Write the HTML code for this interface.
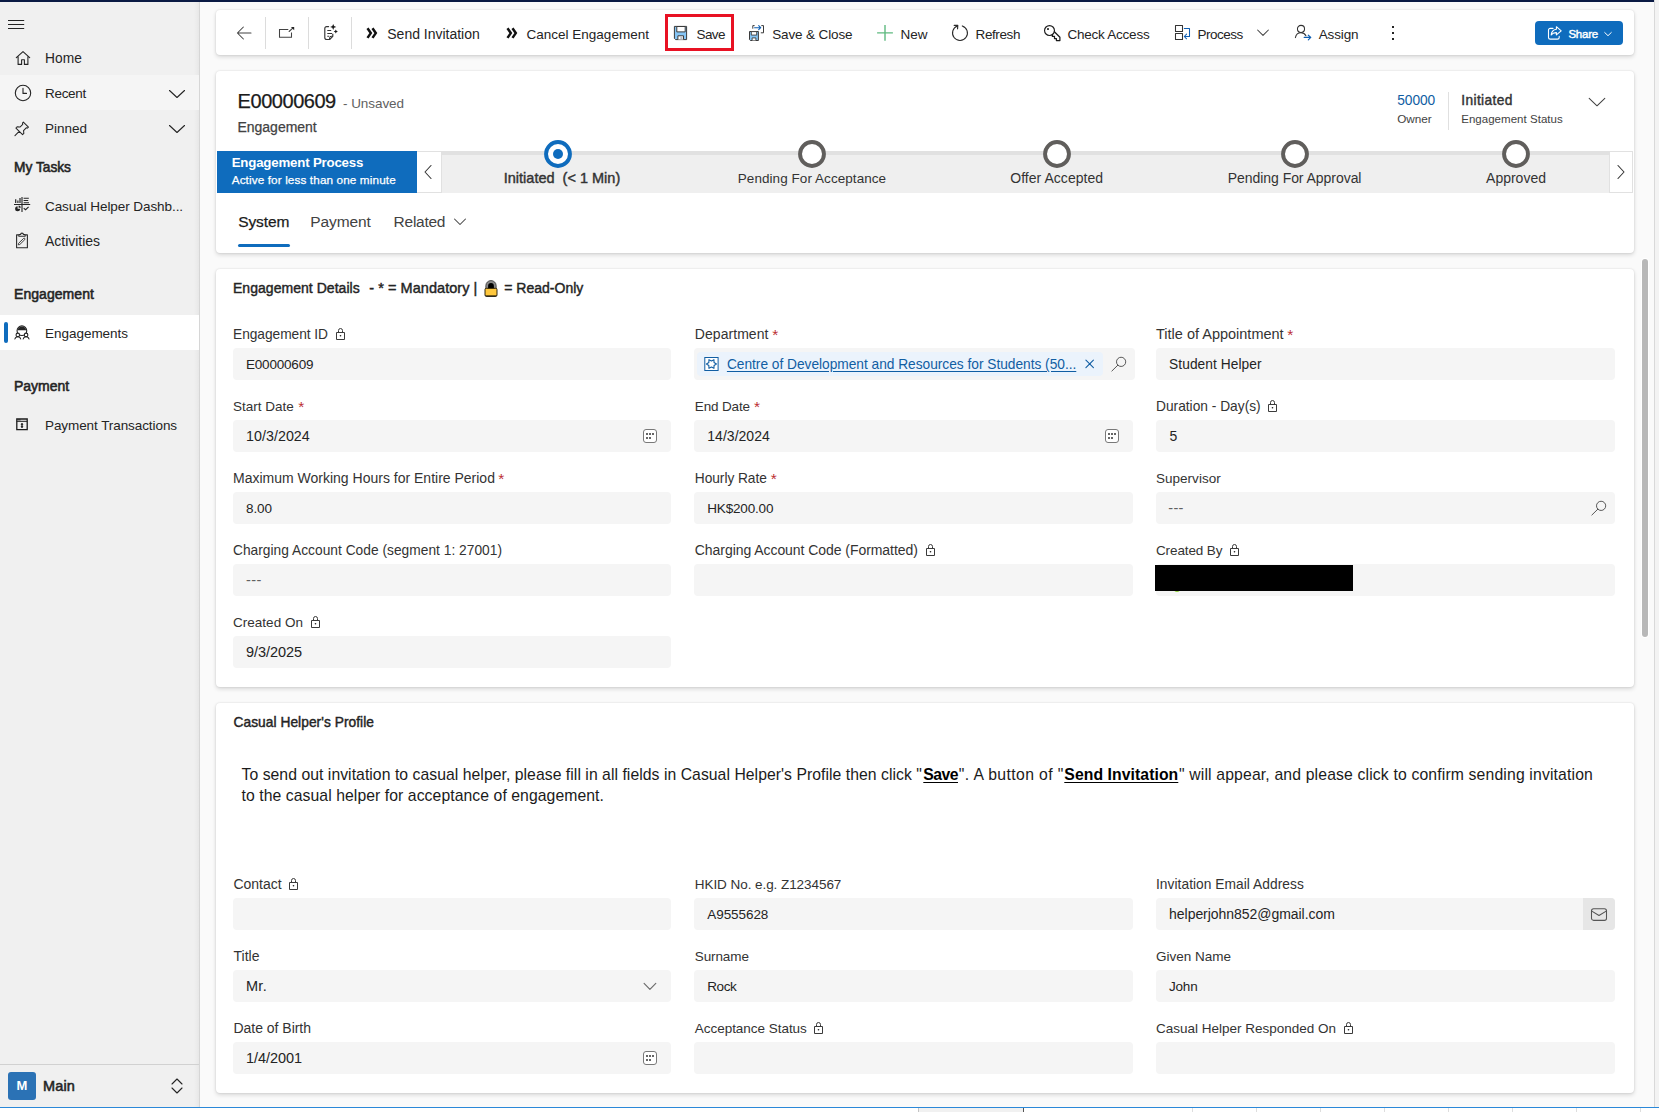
<!DOCTYPE html>
<html lang="en"><head><meta charset="utf-8"><title>Engagement: E00000609</title>
<style>
html,body{margin:0;padding:0;}
html{width:1659px;height:1112px;overflow:hidden;}
body{width:1659px;height:1112px;overflow:hidden;position:relative;background:#fafafa;font-family:"Liberation Sans",sans-serif;color:#242424;}
.a{position:absolute;display:block;}
.t{position:absolute;white-space:pre;display:block;}
.card{position:absolute;background:#fff;border-radius:4px;box-shadow:0 0 2px rgba(0,0,0,.12),0 2px 4px rgba(0,0,0,.14);}
.inp{position:absolute;background:#f5f5f5;border-radius:4px;}
</style></head>
<body>
<div class="a" style="left:0px;top:0px;width:1659px;height:1112px;background:#fafafa;"></div>
<div class="a" style="left:1655px;top:0px;width:4px;height:1112px;background:#f3f3f3;"></div>
<div class="a" style="left:1654px;top:0px;width:1px;height:1108px;background:#d9d9d9;"></div>
<div class="a" style="left:0px;top:0px;width:1654px;height:2px;background:#0a1a44;"></div>
<div class="a" style="left:0px;top:1108px;width:1659px;height:4px;background:#ffffff;"></div>
<div class="a" style="left:0px;top:1107px;width:1659px;height:1px;background:#2b88d8;"></div>
<div class="a" style="left:919px;top:1108px;width:104px;height:4px;background:#f1f1f1;"></div>
<div class="a" style="left:918px;top:1108px;width:1px;height:4px;background:#c4c4c4;"></div>
<div class="a" style="left:1023px;top:1108px;width:1px;height:4px;background:#555;"></div>
<div class="a" style="left:1192px;top:1108px;width:1px;height:4px;background:#dedede;"></div>
<div class="a" style="left:1256px;top:1108px;width:1px;height:4px;background:#dedede;"></div>
<div class="a" style="left:1320px;top:1108px;width:1px;height:4px;background:#dedede;"></div>
<div class="a" style="left:1384px;top:1108px;width:1px;height:4px;background:#dedede;"></div>
<div class="a" style="left:1448px;top:1108px;width:1px;height:4px;background:#dedede;"></div>
<div class="a" style="left:1512px;top:1108px;width:1px;height:4px;background:#dedede;"></div>
<div class="a" style="left:1576px;top:1108px;width:1px;height:4px;background:#dedede;"></div>
<div class="a" style="left:1640px;top:1108px;width:1px;height:4px;background:#dedede;"></div>
<div class="a" style="left:1642px;top:259px;width:6px;height:378px;background:#b8b8b8;border-radius:3px;box-shadow:0 0 0 1px rgba(255,255,255,.950);"></div>
<div class="a" style="left:0px;top:2px;width:199px;height:1105px;background:#f0f0f0;"></div>
<div class="a" style="left:199px;top:2px;width:1px;height:1105px;background:#d6d6d6;"></div>
<div class="a" style="left:194px;top:2px;width:5px;height:1105px;background:linear-gradient(90deg,rgba(0,0,0,0),rgba(0,0,0,.035));"></div>
<div class="a" style="left:0px;top:75px;width:199px;height:35px;background:#f5f5f5;"></div>
<div class="a" style="left:0px;top:315px;width:199px;height:35px;background:#ffffff;"></div>
<div class="a" style="left:4px;top:322px;width:4px;height:21px;background:#0f6cbd;border-radius:2px;"></div>
<div class="a" style="left:0px;top:1064px;width:199px;height:1px;background:#d1d1d1;"></div>
<svg class="a" style="left:6px;top:16px;" width="20" height="16" viewBox="0 0 20 16" fill="none"><path d="M2 4.5h16.2M2 8.5h16.2M2 12.5h16.2" stroke="#242424" stroke-width="1"/></svg>
<svg class="a" style="left:13.5px;top:49.3px;" width="18" height="18" viewBox="0 0 18 18" fill="none"><path d="M2.3 8.7 9 2.6l6.700 6.100M4.100 7.500v7.900h3.500v-4.700h2.800v4.700h3.500V7.500" stroke="#242424" stroke-width="1.100" stroke-linejoin="round" stroke-linecap="round"/></svg>
<span class="t" style="top:49px;font-size:13.75px;line-height:20px;color:#242424;letter-spacing:0.078px;left:45px;"><span>Home</span></span>
<svg class="a" style="left:13.6px;top:83.8px;" width="18" height="18" viewBox="0 0 18 18" fill="none"><circle cx="9" cy="9" r="7.700" stroke="#242424" stroke-width="1.100"/><path d="M9 4.400V9.400h3.500" stroke="#242424" stroke-width="1.100" stroke-linecap="round" stroke-linejoin="round"/></svg>
<span class="t" style="top:84px;font-size:13.5px;line-height:20px;color:#242424;letter-spacing:-0.297px;left:45px;"><span>Recent</span></span>
<svg class="a" style="left:168px;top:88px;" width="18" height="12" viewBox="0 0 18 12" fill="none"><path d="M1.5 2.5 9 9.5l7.5-7" stroke="#242424" stroke-width="1.1" stroke-linecap="round" stroke-linejoin="round"/></svg>
<svg class="a" style="left:13.4px;top:120.3px;" width="17.6" height="17.6" viewBox="0 0 18 18" fill="none"><path d="M10.6 2.2l5.2 5.2-1 .9-1.3-.3-2.7 2.9.3 2.9-1.3 1.2-6.8-6.8 1.2-1.3 2.9.3 2.9-2.7-.3-1.3zM6.3 11.7 2 16" stroke="#242424" stroke-width="1.05" stroke-linejoin="round" stroke-linecap="round"/></svg>
<span class="t" style="top:119px;font-size:13.5px;line-height:20px;color:#242424;letter-spacing:-0.008px;left:45px;"><span>Pinned</span></span>
<svg class="a" style="left:168px;top:123px;" width="18" height="12" viewBox="0 0 18 12" fill="none"><path d="M1.5 2.5 9 9.5l7.5-7" stroke="#242424" stroke-width="1.1" stroke-linecap="round" stroke-linejoin="round"/></svg>
<span class="t" style="top:158px;font-size:13.75px;line-height:20px;color:#242424;-webkit-text-stroke:0.550px #242424;letter-spacing:-0.008px;left:14px;"><span>My Tasks</span></span>
<svg class="a" style="left:13px;top:196px;" width="18" height="18" viewBox="0 0 18 18" fill="none"><path d="M1 8.500h16.200M9 1v15" stroke="#242424" stroke-width="1.100"/><path d="M2.700 3.300V7M4.900 4.600V7M7 2V7" stroke="#242424" stroke-width="1.200"/><path d="M10.600 2.300h5.200M10.600 4.500h4.600M10.600 6.700h5.400" stroke="#242424" stroke-width="1.100"/><path d="M4.600 10.200a2.500 2.500 0 1 0 2.500 2.500H4.600z" fill="#242424"/><path d="M5.600 9.600a2.300 2.300 0 0 1 2.200 2.200H5.600z" fill="#242424"/><path d="M10.700 12.300l1.900 1.400 3-2.800" stroke="#242424" stroke-width="1.100"/></svg>
<span class="t" style="top:197px;font-size:13.5px;line-height:20px;color:#242424;letter-spacing:-0.072px;left:45px;"><span>Casual Helper Dashb...</span></span>
<svg class="a" style="left:13px;top:232px;" width="18" height="18" viewBox="0 0 18 18" fill="none"><path d="M5.800 2.900H3.600v12.900h10.800V2.900h-2.200" stroke="#2b2b2b" stroke-width="1.100" stroke-linejoin="round"/><path d="M5.900 4.300V2.500h1.700a1.400 1.400 0 0 1 2.800 0h1.700v1.800z" stroke="#2b2b2b" stroke-width="1.100" stroke-linejoin="round"/><path d="M5.300 12.800l.3-1.500 5-4.900a.85.85 0 0 1 1.200 1.200l-5 4.900z" stroke="#2b2b2b" stroke-width="0.900" stroke-linejoin="round"/></svg>
<span class="t" style="top:231px;font-size:14.0px;line-height:20px;color:#242424;letter-spacing:-0.023px;left:45px;"><span>Activities</span></span>
<span class="t" style="top:284px;font-size:14.0px;line-height:20px;color:#242424;-webkit-text-stroke:0.550px #242424;letter-spacing:0.059px;left:14px;"><span>Engagement</span></span>
<svg class="a" style="left:13px;top:324px;" width="18" height="18" viewBox="0 0 18 18" fill="none"><circle cx="8.900" cy="6.700" r="4.850" stroke="#242424" stroke-width="1.100"/><path d="M4.700 6.200a4.250 4.250 0 0 1 8.400 0z" fill="#242424"/><circle cx="4.800" cy="10.900" r="1.750" fill="#fff" stroke="#242424" stroke-width="1.100"/><circle cx="13.100" cy="10.900" r="1.750" fill="#fff" stroke="#242424" stroke-width="1.100"/><path d="M1.900 15c.4-1.700 1.500-2.300 2.900-2.300s2.500.6 2.900 2.300M10.200 15c.4-1.700 1.500-2.300 2.900-2.300s2.500.6 2.900 2.300" stroke="#242424" stroke-width="1.050" stroke-linecap="round"/></svg>
<span class="t" style="top:324px;font-size:13.5px;line-height:20px;color:#242424;letter-spacing:-0.028px;left:45px;"><span>Engagements</span></span>
<span class="t" style="top:376px;font-size:14.0px;line-height:20px;color:#242424;-webkit-text-stroke:0.550px #242424;letter-spacing:-0.036px;left:14px;"><span>Payment</span></span>
<svg class="a" style="left:13px;top:416px;" width="18" height="18" viewBox="0 0 18 18" fill="none"><path d="M3.800 3h10.400v10.600H3.800z" stroke="#1b1b1b" stroke-width="1.300"/><path d="M3.800 5.300h10.400" stroke="#1b1b1b" stroke-width="1"/><path d="M4.600 3.900h3" stroke="#1b1b1b" stroke-width="0.800"/><path d="M9 7.200v4.600" stroke="#1b1b1b" stroke-width="1.300"/><path d="M7.500 8.700 9 7l1.500 1.700zM7.500 10.300 9 12l1.500-1.700z" fill="#1b1b1b"/></svg>
<span class="t" style="top:416px;font-size:13.5px;line-height:20px;color:#242424;letter-spacing:-0.079px;left:45px;"><span>Payment Transactions</span></span>
<div class="a" style="left:8px;top:1072px;width:28px;height:28px;background:#2b72b5;border-radius:3px;"></div>
<span class="t" style="top:1076px;font-size:13px;line-height:19px;color:#fff;font-weight:700;left:-98px;width:240px;text-align:center;"><span>M</span></span>
<span class="t" style="top:1076px;font-size:14.5px;line-height:21px;color:#242424;-webkit-text-stroke:0.550px #242424;letter-spacing:0.141px;left:43px;"><span>Main</span></span>
<svg class="a" style="left:168px;top:1076px;" width="18" height="20" viewBox="0 0 18 20" fill="none"><path d="M4 8 9 3l5 5M4 12l5 5 5-5" stroke="#242424" stroke-width="1.1" stroke-linejoin="round" stroke-linecap="round"/></svg>
<div class="card" style="left:216px;top:10px;width:1418px;height:45px;"></div>
<div class="a" style="left:265px;top:17px;width:1px;height:32px;background:#dcdcdc;"></div>
<div class="a" style="left:308px;top:17px;width:1px;height:32px;background:#dcdcdc;"></div>
<div class="a" style="left:351px;top:17px;width:1px;height:32px;background:#dcdcdc;"></div>
<svg class="a" style="left:235px;top:24px;" width="18" height="18" viewBox="0 0 18 18" fill="none"><path d="M16 9H2.6M8.4 3 2.4 9l6 6" stroke="#424242" stroke-width="1.05" stroke-linecap="round" stroke-linejoin="round"/></svg>
<svg class="a" style="left:277px;top:24px;" width="18" height="18" viewBox="0 0 18 18" fill="none"><path d="M11.300 5.400H2.500v7.850h12V8.600" stroke="#424242" stroke-width="1.050"/><path d="M12.100 7.500 16.300 3.700" stroke="#424242" stroke-width="1.050" stroke-linecap="round"/><path d="M13.900 2.900h3.300v3.300z" fill="#242424"/></svg>
<svg class="a" style="left:321px;top:23px;" width="20" height="20" viewBox="0 0 20 20" fill="none"><path d="M7.600 3.600H5.600A1.800 1.800 0 0 0 3.800 5.400v9.300a1.800 1.800 0 0 0 1.800 1.800h3l3.200-3.200V11" stroke="#333" stroke-width="1.150" stroke-linejoin="round" stroke-linecap="round"/><path d="M8.600 16.500v-1.700a1.500 1.500 0 0 1 1.500-1.500h1.700" stroke="#333" stroke-width="1"/><path d="M6.300 7.400h3.900M6.300 10.500H11M6.300 13.300h1.900" stroke="#333" stroke-width="1.050"/><path d="M12.200 0.900l.9 2.150 2.150.9-2.150.9-.9 2.150-.9-2.150-2.150-.9 2.150-.9zM14.800 6.400l.65 1.450 1.450.65-1.450.65-.65 1.450-.65-1.450-1.450-.65 1.450-.65z" fill="#1b1b1b"/></svg>
<svg class="a" style="left:366px;top:26.5px;" width="12" height="13" viewBox="0 0 12 13" fill="none"><path d="M1.500 1.300 4.800 6.100 1.500 10.900M6.500 1.300 9.800 6.100 6.500 10.900" stroke="#111" stroke-width="2.500" stroke-linejoin="miter"/></svg>
<span class="t" style="top:24px;font-size:14.0px;line-height:20px;color:#242424;letter-spacing:-0.015px;left:387.3px;"><span>Send Invitation</span></span>
<svg class="a" style="left:506px;top:26.5px;" width="12" height="13" viewBox="0 0 12 13" fill="none"><path d="M1.500 1.300 4.800 6.100 1.500 10.900M6.500 1.300 9.800 6.100 6.500 10.900" stroke="#111" stroke-width="2.500" stroke-linejoin="miter"/></svg>
<span class="t" style="top:25px;font-size:13.5px;line-height:20px;color:#242424;letter-spacing:0.015px;left:526.4px;"><span>Cancel Engagement</span></span>
<div class="a" style="left:665px;top:14px;width:63px;height:31px;border:3px solid #e81123;"></div>
<svg class="a" style="left:673px;top:25px;" width="16" height="16" viewBox="0 0 16 16" fill="none"><path d="M1.400 1.400h12.200v13.200H2.600L1.400 13.400z" fill="#86c5f5" stroke="#3b3b3b" stroke-width="1" stroke-linejoin="round"/><path d="M3.800 1.500h8.400v5.400H3.800z" fill="#fff" stroke="#3b3b3b" stroke-width="1"/><path d="M4.900 14.500v-3.700h5.600v3.700" fill="#fff" stroke="#3b3b3b" stroke-width="1"/><path d="M7.300 11.900h2.200v2.500H7.300z" fill="#b9bec6"/></svg>
<span class="t" style="top:25px;font-size:13.5px;line-height:20px;color:#242424;letter-spacing:-0.645px;left:696.6px;"><span>Save</span></span>
<svg class="a" style="left:748px;top:24px;" width="17" height="17" viewBox="0 0 17 17" fill="none"><path d="M1.500 7.500h8.900v9H2.400l-.9-.900z" fill="#86c5f5" stroke="#3b3b3b" stroke-width="1" stroke-linejoin="round"/><path d="M3.300 7.600h5.400v3.500H3.300z" fill="#fff" stroke="#3b3b3b" stroke-width="0.900"/><path d="M4.100 16.400v-2.500h3.800v2.500" fill="#fff" stroke="#3b3b3b" stroke-width="0.900"/><path d="M4.800 4.700V1.600h1.800M13.300 1.600h2.200v7.200h-2.700" stroke="#3b3b3b" stroke-width="1"/><path d="M6.600 3.700h6M10.700 1.700l2 2-2 2" stroke="#0f5fb3" stroke-width="1.150" stroke-linejoin="round" stroke-linecap="round"/></svg>
<span class="t" style="top:25px;font-size:13.5px;line-height:20px;color:#242424;letter-spacing:-0.133px;left:772.2px;"><span>Save &amp; Close</span></span>
<svg class="a" style="left:876px;top:24px;" width="18" height="18" viewBox="0 0 18 18" fill="none"><path d="M9 1v15.800M1.100 8.900h15.800" stroke="#5fba80" stroke-width="1.400"/></svg>
<span class="t" style="top:25px;font-size:13.5px;line-height:20px;color:#242424;letter-spacing:-0.005px;left:900.5px;"><span>New</span></span>
<svg class="a" style="left:950px;top:24px;" width="20" height="18" viewBox="0 0 20 18" fill="none"><path d="M12.300 1.910A7.450 7.450 0 1 1 7.400 2" stroke="#2b2b2b" stroke-width="1.100" stroke-linecap="round"/><path d="M4.200 1.400h3.600l-.250 3.400" stroke="#2b2b2b" stroke-width="1.150" stroke-linecap="round" stroke-linejoin="round"/><path d="M6 1.400h1.800l-.1 1.600z" fill="#2b2b2b"/></svg>
<span class="t" style="top:25px;font-size:13.5px;line-height:20px;color:#242424;letter-spacing:-0.412px;left:975.6px;"><span>Refresh</span></span>
<svg class="a" style="left:1043px;top:24px;" width="18" height="18" viewBox="0 0 18 18" fill="none"><circle cx="6.500" cy="6.500" r="4.950" stroke="#1b1b1b" stroke-width="1.150"/><rect x="4.100" y="4.100" width="1.800" height="1.800" rx="0.400" fill="#1b1b1b"/><path d="M11.400 7.800l5.500 5.500v3.300h-3.500v-2.100h-1.900v-2.100H9.400v-1.900" stroke="#1b1b1b" stroke-width="1.250" stroke-linejoin="round" stroke-linecap="round"/></svg>
<span class="t" style="top:25px;font-size:13.5px;line-height:20px;color:#242424;letter-spacing:-0.250px;left:1067.6px;"><span>Check Access</span></span>
<svg class="a" style="left:1174px;top:24px;" width="18" height="18" viewBox="0 0 18 18" fill="none"><path d="M1.500 1.500h7v6h-7zM1.500 9.500h7v6h-7z" stroke="#333" stroke-width="1.050" stroke-linejoin="round"/><path d="M10.300 4.400h5.200v8.100h-5" stroke="#0f5fb3" stroke-width="1.050" stroke-linejoin="round" stroke-linecap="round"/><path d="M12.600 10.100l-2.300 2.400 2.300 2.300" stroke="#0f5fb3" stroke-width="1.050" stroke-linecap="round" stroke-linejoin="round"/></svg>
<span class="t" style="top:25px;font-size:13.5px;line-height:20px;color:#242424;letter-spacing:-0.497px;left:1197.4px;"><span>Process</span></span>
<svg class="a" style="left:1256px;top:27px;" width="14" height="12" viewBox="0 0 14 12" fill="none"><path d="M1.6 3 7 8.4 12.4 3" stroke="#424242" stroke-width="1.05" stroke-linecap="round" stroke-linejoin="round"/></svg>
<svg class="a" style="left:1293px;top:24px;" width="19" height="18" viewBox="0 0 19 18" fill="none"><circle cx="8" cy="4.900" r="3.550" stroke="#333" stroke-width="1.050"/><path d="M2.400 13.600C3 10.400 5.300 8.700 8 8.700c2.300 0 4 1.100 4.900 3" stroke="#333" stroke-width="1.050" stroke-linecap="round"/><path d="M11.200 13.400h6.400M15.300 11.200l2.500 2.200-2.500 2.400" stroke="#0f5fb3" stroke-width="1.150" stroke-linecap="round" stroke-linejoin="round"/></svg>
<span class="t" style="top:25px;font-size:13.5px;line-height:20px;color:#242424;letter-spacing:-0.139px;left:1318.7px;"><span>Assign</span></span>
<div class="a" style="left:1392px;top:26.3px;width:2px;height:2px;background:#242424;"></div>
<div class="a" style="left:1392px;top:32px;width:2px;height:2px;background:#242424;"></div>
<div class="a" style="left:1392px;top:37.7px;width:2px;height:2px;background:#242424;"></div>
<div class="a" style="left:1535px;top:21px;width:88px;height:24px;background:#0f6cbd;border-radius:4px;"></div>
<svg class="a" style="left:1546px;top:25px;" width="17" height="16" viewBox="0 0 17 16" fill="none"><path d="M7 3.4H4.2A1.7 1.7 0 0 0 2.5 5.1v7.3a1.7 1.7 0 0 0 1.7 1.7h7.3a1.7 1.7 0 0 0 1.7-1.7v-1" stroke="#fff" stroke-width="1.1" stroke-linecap="round"/><path d="M10.4 1.7l4.8 4.1-4.8 4.1V7.6C8 7.5 6.3 8.300 5.2 10c.2-3 2-5.300 5.200-5.800z" stroke="#fff" stroke-width="1.1" stroke-linejoin="round"/></svg>
<span class="t" style="top:26px;font-size:11.5px;line-height:17px;color:#fff;-webkit-text-stroke:0.42px #fff;letter-spacing:-0.217px;left:1568.4px;"><span>Share</span></span>
<svg class="a" style="left:1603px;top:30px;" width="10" height="8" viewBox="0 0 10 8" fill="none"><path d="M1.700 2.500 5 5.700 8.300 2.500" stroke="#fff" stroke-width="1" stroke-linecap="round" stroke-linejoin="round"/></svg>
<div class="card" style="left:216px;top:71px;width:1418px;height:182px;"></div>
<span class="t" style="top:87px;font-size:20.0px;line-height:28px;color:#1b1b1b;-webkit-text-stroke:0.250px #1b1b1b;letter-spacing:-0.459px;left:237.6px;"><span>E00000609</span></span>
<span class="t" style="top:94px;font-size:13.5px;line-height:20px;color:#616161;letter-spacing:-0.059px;left:343px;"><span>- Unsaved</span></span>
<span class="t" style="top:117px;font-size:14.0px;line-height:20px;color:#424242;-webkit-text-stroke:0.250px #424242;letter-spacing:-0.021px;left:237.5px;"><span>Engagement</span></span>
<span class="t" style="top:91px;font-size:13.75px;line-height:20px;color:#115ea3;letter-spacing:-0.070px;left:1397.3px;"><span>50000</span></span>
<span class="t" style="top:110px;font-size:11.75px;line-height:17px;color:#424242;letter-spacing:-0.062px;left:1397.3px;"><span>Owner</span></span>
<div class="a" style="left:1448px;top:92px;width:1px;height:38px;background:#e0e0e0;"></div>
<span class="t" style="top:91px;font-size:13.75px;line-height:20px;color:#333;-webkit-text-stroke:0.42px #333;letter-spacing:0.392px;left:1461.2px;"><span>Initiated</span></span>
<span class="t" style="top:111px;font-size:11.5px;line-height:17px;color:#424242;letter-spacing:0.034px;left:1461.2px;"><span>Engagement Status</span></span>
<svg class="a" style="left:1588px;top:96px;" width="18" height="12" viewBox="0 0 18 12" fill="none"><path d="M1.2 2.300 9 9.800l7.800-7.500" stroke="#424242" stroke-width="1.05" stroke-linecap="round" stroke-linejoin="round"/></svg>
<div class="a" style="left:441px;top:151px;width:1168px;height:42px;background:#efefef;"></div>
<div class="a" style="left:441px;top:151px;width:1168px;height:4px;background:#e1e1e1;"></div>
<div class="a" style="left:217px;top:151px;width:200px;height:42px;background:#0f6cbd;"></div>
<span class="t" style="top:153px;font-size:13.25px;line-height:19px;color:#fff;font-weight:700;letter-spacing:-0.181px;left:231.7px;"><span>Engagement Process</span></span>
<span class="t" style="top:171px;font-size:11.75px;line-height:17px;color:#fff;-webkit-text-stroke:0.250px #fff;letter-spacing:0.111px;left:231.7px;"><span>Active for less than one minute</span></span>
<div class="a" style="left:417px;top:151px;width:24px;height:40px;background:#fff;border:1px solid #e1e1e1;border-left:none;"></div>
<svg class="a" style="left:422.2px;top:163px;" width="12" height="18" viewBox="0 0 12 18" fill="none"><path d="M9 2.500 3 9l6 6.500" stroke="#333" stroke-width="1.1" stroke-linecap="round" stroke-linejoin="round"/></svg>
<div class="a" style="left:1609px;top:151px;width:22px;height:40px;background:#fff;border:1px solid #e1e1e1;"></div>
<svg class="a" style="left:1615px;top:163px;" width="12" height="18" viewBox="0 0 12 18" fill="none"><path d="M3 2.500 9 9l-6 6.500" stroke="#333" stroke-width="1.1" stroke-linecap="round" stroke-linejoin="round"/></svg>
<svg class="a" style="left:543px;top:139px;" width="30" height="30" viewBox="0 0 30 30" fill="none"><circle cx="15" cy="15" r="11.950" fill="#fff" stroke="#0f6cbd" stroke-width="3.900"/><circle cx="15" cy="15" r="5" fill="#0f6cbd"/></svg>
<span class="t" style="top:168px;font-size:14.5px;line-height:21px;color:#333;-webkit-text-stroke:0.42px #333;left:442px;width:240px;text-align:center;"><span>Initiated  (&lt; 1 Min)</span></span>
<svg class="a" style="left:797px;top:139px;" width="30" height="30" viewBox="0 0 30 30" fill="none"><circle cx="15" cy="15" r="11.950" fill="#fff" stroke="#605e5c" stroke-width="3.900"/></svg>
<span class="t" style="top:169px;font-size:13.5px;line-height:20px;color:#333;letter-spacing:0.059px;left:692px;width:240px;text-align:center;"><span>Pending For Acceptance</span></span>
<svg class="a" style="left:1041.7px;top:139px;" width="30" height="30" viewBox="0 0 30 30" fill="none"><circle cx="15" cy="15" r="11.950" fill="#fff" stroke="#605e5c" stroke-width="3.900"/></svg>
<span class="t" style="top:168px;font-size:14.0px;line-height:20px;color:#333;letter-spacing:0.039px;left:936.7px;width:240px;text-align:center;"><span>Offer Accepted</span></span>
<svg class="a" style="left:1279.6px;top:139px;" width="30" height="30" viewBox="0 0 30 30" fill="none"><circle cx="15" cy="15" r="11.950" fill="#fff" stroke="#605e5c" stroke-width="3.900"/></svg>
<span class="t" style="top:168px;font-size:14.0px;line-height:20px;color:#333;letter-spacing:-0.047px;left:1174.6px;width:240px;text-align:center;"><span>Pending For Approval</span></span>
<svg class="a" style="left:1501px;top:139px;" width="30" height="30" viewBox="0 0 30 30" fill="none"><circle cx="15" cy="15" r="11.950" fill="#fff" stroke="#605e5c" stroke-width="3.900"/></svg>
<span class="t" style="top:168px;font-size:14.0px;line-height:20px;color:#333;letter-spacing:-0.005px;left:1396px;width:240px;text-align:center;"><span>Approved</span></span>
<span class="t" style="top:211px;font-size:15.5px;line-height:22px;color:#1b1b1b;-webkit-text-stroke:0.250px #1b1b1b;letter-spacing:-0.081px;left:238.2px;"><span>System</span></span>
<div class="a" style="left:238px;top:244px;width:52px;height:3px;background:#0f6cbd;border-radius:2px;"></div>
<span class="t" style="top:211px;font-size:15.5px;line-height:22px;color:#424242;letter-spacing:-0.125px;left:310.3px;"><span>Payment</span></span>
<span class="t" style="top:211px;font-size:15.5px;line-height:22px;color:#424242;letter-spacing:-0.262px;left:393.6px;"><span>Related</span></span>
<svg class="a" style="left:453.3px;top:217px;" width="14" height="10" viewBox="0 0 14 10" fill="none"><path d="M1.5 2 7 7.500 12.500 2" stroke="#424242" stroke-width="1.05" stroke-linecap="round" stroke-linejoin="round"/></svg>
<div class="card" style="left:216px;top:269px;width:1418px;height:418px;"></div>
<span class="t" style="top:278px;font-size:14.0px;line-height:20px;color:#242424;-webkit-text-stroke:0.42px #242424;letter-spacing:0.035px;left:233px;"><span>Engagement Details</span></span>
<span class="t" style="top:278px;font-size:14.5px;line-height:21px;color:#242424;-webkit-text-stroke:0.42px #242424;letter-spacing:0.045px;left:369.3px;"><span>- * = Mandatory |</span></span>
<span class="t" style="top:278px;font-size:14.0px;line-height:20px;color:#242424;-webkit-text-stroke:0.42px #242424;left:504.3px;"><span>= Read-Only</span></span>
<svg class="a" style="left:484px;top:279.5px;" width="14" height="17" viewBox="0 0 14 17" fill="none"><path d="M1.800 9V5.700a5.200 5.200 0 0 1 10.400 0V9z" fill="#8a8a8a" stroke="#2a2a2a" stroke-width="0.700"/><path d="M4.100 9V6a2.900 2.900 0 0 1 5.800 0v3z" fill="#000"/><rect x="1" y="8.300" width="12" height="8" rx="1.300" fill="#ffc83d" stroke="#1a1200" stroke-width="0.900"/><path d="M1.600 16h10.800" stroke="#000" stroke-width="0.900"/></svg>
<span class="t" style="top:325px;font-size:13.75px;line-height:20px;color:#333;letter-spacing:-0.042px;left:233px;"><span>Engagement ID</span></span>
<svg class="a" style="left:336px;top:327.4px;" width="10" height="14" viewBox="0 0 10 14" fill="none"><path d="M0.500 5.500h8v7h-8z" stroke="#3b3b3b" stroke-width="1" stroke-linejoin="round"/><path d="M2.500 5.500V3.500a2 2 0 0 1 4 0v2" stroke="#3b3b3b" stroke-width="1"/><circle cx="4.500" cy="8.700" r="0.800" fill="#1b1b1b"/></svg>
<div class="inp" style="left:233px;top:348px;width:438px;height:32px;"></div>
<span class="t" style="top:355px;font-size:13.5px;line-height:20px;color:#242424;letter-spacing:-0.198px;left:246px;"><span>E00000609</span></span>
<span class="t" style="top:324px;font-size:14.0px;line-height:20px;color:#333;letter-spacing:0.054px;left:694.8px;"><span>Department</span></span>
<span class="t" style="top:324px;font-size:15.5px;line-height:22px;color:#bc2f32;left:772.3px;"><span>*</span></span>
<div class="inp" style="left:694px;top:348px;width:441px;height:32px;"></div>
<div class="a" style="left:697px;top:352px;width:406px;height:24px;background:#ebf3fc;border-radius:4px;"></div>
<svg class="a" style="left:704px;top:357px;" width="15" height="14" viewBox="0 0 15 14" fill="none"><rect x="0.800" y="0.500" width="13.300" height="13" fill="#fff" stroke="#115ea3" stroke-width="1"/><path d="M12.45 7.00 L10.05 8.50 L9.95 11.33 L7.45 10.00 L4.95 11.33 L4.85 8.50 L2.45 7.00 L4.85 5.50 L4.95 2.67 L7.45 4.00 L9.95 2.67 L10.05 5.50Z" stroke="#115ea3" stroke-width="1.100" stroke-linejoin="round"/></svg>
<span class="t" style="top:355px;font-size:13.75px;line-height:20px;color:#115ea3;letter-spacing:-0.026px;left:726.9px;text-decoration:underline;text-underline-offset:1.500px;"><span>Centre of Development and Resources for Students (50...</span></span>
<svg class="a" style="left:1084px;top:358px;" width="12" height="12" viewBox="0 0 12 12" fill="none"><path d="M1.900 2.200l7.500 7.500M9.400 2.200 1.900 9.700" stroke="#115ea3" stroke-width="1.100" stroke-linecap="round"/></svg>
<svg class="a" style="left:1111px;top:356px;" width="16" height="16" viewBox="0 0 16 16" fill="none"><circle cx="10.100" cy="5.850" r="4.600" stroke="#4f4f4f" stroke-width="0.950"/><path d="M6.800 9.200 0.900 15" stroke="#4f4f4f" stroke-width="0.950" stroke-linecap="round"/></svg>
<span class="t" style="top:324px;font-size:14.5px;line-height:21px;color:#333;left:1156px;"><span>Title of Appointment</span></span>
<span class="t" style="top:324px;font-size:15.5px;line-height:22px;color:#bc2f32;left:1287.3px;"><span>*</span></span>
<div class="inp" style="left:1156px;top:348px;width:459px;height:32px;"></div>
<span class="t" style="top:355px;font-size:13.75px;line-height:20px;color:#242424;letter-spacing:0.055px;left:1169.1px;"><span>Student Helper</span></span>
<span class="t" style="top:397px;font-size:13.5px;line-height:20px;color:#333;left:233px;"><span>Start Date</span></span>
<span class="t" style="top:396px;font-size:15.5px;line-height:22px;color:#bc2f32;left:298.3px;"><span>*</span></span>
<div class="inp" style="left:233px;top:420px;width:438px;height:32px;"></div>
<span class="t" style="top:426px;font-size:14.25px;line-height:21px;color:#242424;letter-spacing:0.044px;left:246px;"><span>10/3/2024</span></span>
<svg class="a" style="left:642px;top:428px;" width="16" height="16" viewBox="0 0 16 16" fill="none"><rect x="1" y="1" width="14" height="14" rx="3" fill="#fff" opacity="0.900"/><rect x="1.500" y="1.500" width="13" height="13" rx="2.500" fill="#fff" stroke="#6a6a6a" stroke-width="0.900"/><path d="M4 5h2v2H4zM7 5h2v2H7zM10 5h2v2h-2zM4 9h2v2H4zM7 9h2v2H7z" fill="#666"/></svg>
<span class="t" style="top:397px;font-size:13.5px;line-height:20px;color:#333;letter-spacing:-0.150px;left:694.8px;"><span>End Date</span></span>
<span class="t" style="top:396px;font-size:15.5px;line-height:22px;color:#bc2f32;left:754.0px;"><span>*</span></span>
<div class="inp" style="left:694px;top:420px;width:439px;height:32px;"></div>
<span class="t" style="top:426px;font-size:14.0px;line-height:20px;color:#242424;letter-spacing:0.023px;left:707.3px;"><span>14/3/2024</span></span>
<svg class="a" style="left:1104px;top:428px;" width="16" height="16" viewBox="0 0 16 16" fill="none"><rect x="1" y="1" width="14" height="14" rx="3" fill="#fff" opacity="0.900"/><rect x="1.500" y="1.500" width="13" height="13" rx="2.500" fill="#fff" stroke="#6a6a6a" stroke-width="0.900"/><path d="M4 5h2v2H4zM7 5h2v2H7zM10 5h2v2h-2zM4 9h2v2H4zM7 9h2v2H7z" fill="#666"/></svg>
<span class="t" style="top:397px;font-size:13.75px;line-height:20px;color:#333;left:1156px;"><span>Duration - Day(s)</span></span>
<svg class="a" style="left:1268px;top:399px;" width="10" height="14" viewBox="0 0 10 14" fill="none"><path d="M0.500 5.500h8v7h-8z" stroke="#3b3b3b" stroke-width="1" stroke-linejoin="round"/><path d="M2.500 5.500V3.500a2 2 0 0 1 4 0v2" stroke="#3b3b3b" stroke-width="1"/><circle cx="4.500" cy="8.700" r="0.800" fill="#1b1b1b"/></svg>
<div class="inp" style="left:1156px;top:420px;width:459px;height:32px;"></div>
<span class="t" style="top:426px;font-size:14px;line-height:20px;color:#242424;left:1169.6px;"><span>5</span></span>
<span class="t" style="top:468px;font-size:14.0px;line-height:20px;color:#333;left:233px;"><span>Maximum Working Hours for Entire Period</span></span>
<span class="t" style="top:468px;font-size:15.5px;line-height:22px;color:#bc2f32;left:498.3px;"><span>*</span></span>
<div class="inp" style="left:233px;top:492px;width:438px;height:32px;"></div>
<span class="t" style="top:499px;font-size:13.5px;line-height:20px;color:#242424;letter-spacing:-0.070px;left:246px;"><span>8.00</span></span>
<span class="t" style="top:469px;font-size:13.75px;line-height:20px;color:#333;letter-spacing:-0.055px;left:694.8px;"><span>Hourly Rate</span></span>
<span class="t" style="top:468px;font-size:15.5px;line-height:22px;color:#bc2f32;left:770.8px;"><span>*</span></span>
<div class="inp" style="left:694px;top:492px;width:439px;height:32px;"></div>
<span class="t" style="top:499px;font-size:13.5px;line-height:20px;color:#242424;letter-spacing:-0.174px;left:707.3px;"><span>HK$200.00</span></span>
<span class="t" style="top:469px;font-size:13.5px;line-height:20px;color:#333;letter-spacing:0.017px;left:1156px;"><span>Supervisor</span></span>
<div class="inp" style="left:1156px;top:492px;width:459px;height:32px;"></div>
<span class="t" style="top:498px;font-size:14.5px;line-height:21px;color:#616161;letter-spacing:0.367px;left:1168.2px;"><span>---</span></span>
<svg class="a" style="left:1591px;top:500px;" width="16" height="16" viewBox="0 0 16 16" fill="none"><circle cx="10.100" cy="5.850" r="4.600" stroke="#4f4f4f" stroke-width="0.950"/><path d="M6.800 9.200 0.900 15" stroke="#4f4f4f" stroke-width="0.950" stroke-linecap="round"/></svg>
<span class="t" style="top:541px;font-size:13.75px;line-height:20px;color:#333;letter-spacing:0.018px;left:233px;"><span>Charging Account Code (segment 1: 27001)</span></span>
<div class="inp" style="left:233px;top:564px;width:438px;height:32px;"></div>
<span class="t" style="top:570px;font-size:14.5px;line-height:21px;color:#616161;letter-spacing:0.367px;left:246px;"><span>---</span></span>
<span class="t" style="top:540px;font-size:14.0px;line-height:20px;color:#333;letter-spacing:-0.057px;left:694.8px;"><span>Charging Account Code (Formatted)</span></span>
<svg class="a" style="left:926px;top:543.4px;" width="10" height="14" viewBox="0 0 10 14" fill="none"><path d="M0.500 5.500h8v7h-8z" stroke="#3b3b3b" stroke-width="1" stroke-linejoin="round"/><path d="M2.500 5.500V3.500a2 2 0 0 1 4 0v2" stroke="#3b3b3b" stroke-width="1"/><circle cx="4.500" cy="8.700" r="0.800" fill="#1b1b1b"/></svg>
<div class="inp" style="left:694px;top:564px;width:439px;height:32px;"></div>
<span class="t" style="top:541px;font-size:13.5px;line-height:20px;color:#333;letter-spacing:-0.125px;left:1156px;"><span>Created By</span></span>
<svg class="a" style="left:1229.5px;top:543.4px;" width="10" height="14" viewBox="0 0 10 14" fill="none"><path d="M0.500 5.500h8v7h-8z" stroke="#3b3b3b" stroke-width="1" stroke-linejoin="round"/><path d="M2.500 5.500V3.500a2 2 0 0 1 4 0v2" stroke="#3b3b3b" stroke-width="1"/><circle cx="4.500" cy="8.700" r="0.800" fill="#1b1b1b"/></svg>
<div class="inp" style="left:1156px;top:564px;width:459px;height:32px;"></div>
<div class="a" style="left:1166px;top:585px;width:8px;height:6px;background:#b8b8b8;border-radius:3px;"></div>
<div class="a" style="left:1174px;top:586px;width:6px;height:5.5px;background:#8fd13a;border-radius:3px;"></div>
<div class="a" style="left:1155px;top:565px;width:198px;height:26px;background:#000;"></div>
<span class="t" style="top:613px;font-size:13.5px;line-height:20px;color:#333;letter-spacing:0.020px;left:233px;"><span>Created On</span></span>
<svg class="a" style="left:311px;top:615.4px;" width="10" height="14" viewBox="0 0 10 14" fill="none"><path d="M0.500 5.500h8v7h-8z" stroke="#3b3b3b" stroke-width="1" stroke-linejoin="round"/><path d="M2.500 5.500V3.500a2 2 0 0 1 4 0v2" stroke="#3b3b3b" stroke-width="1"/><circle cx="4.500" cy="8.700" r="0.800" fill="#1b1b1b"/></svg>
<div class="inp" style="left:233px;top:636px;width:438px;height:32px;"></div>
<span class="t" style="top:642px;font-size:14.5px;line-height:21px;color:#242424;letter-spacing:-0.057px;left:246px;"><span>9/3/2025</span></span>
<div class="card" style="left:216px;top:703px;width:1418px;height:390px;"></div>
<span class="t" style="top:713px;font-size:13.75px;line-height:20px;color:#242424;-webkit-text-stroke:0.42px #242424;letter-spacing:0.047px;left:233.5px;"><span>Casual Helper's Profile</span></span>
<span class="t" style="top:764px;font-size:15.75px;line-height:22px;color:#1b1b1b;letter-spacing:0.045px;left:241.5px;"><span>To send out invitation to casual helper, please fill in all fields in Casual Helper's Profile then click "</span></span>
<span class="t" style="top:764px;font-size:15.75px;line-height:22px;color:#000;font-weight:700;letter-spacing:-0.524px;left:923.3px;text-decoration:underline;text-decoration-thickness:1.150px;text-underline-offset:1.500px;"><span>Save</span></span>
<span class="t" style="top:764px;font-size:15.75px;line-height:22px;color:#1b1b1b;letter-spacing:0.383px;left:958.8px;"><span>". A button of "</span></span>
<span class="t" style="top:764px;font-size:15.75px;line-height:22px;color:#000;font-weight:700;letter-spacing:0.074px;left:1064.3px;text-decoration:underline;text-decoration-thickness:1.150px;text-underline-offset:1.500px;"><span>Send Invitation</span></span>
<span class="t" style="top:764px;font-size:15.75px;line-height:22px;color:#1b1b1b;letter-spacing:0.151px;left:1179px;"><span>" will appear, and please click to confirm sending invitation</span></span>
<span class="t" style="top:785px;font-size:15.75px;line-height:22px;color:#1b1b1b;letter-spacing:0.070px;left:241.5px;"><span>to the casual helper for acceptance of engagement.</span></span>
<span class="t" style="top:874px;font-size:14.0px;line-height:20px;color:#333;letter-spacing:-0.036px;left:233.5px;"><span>Contact</span></span>
<svg class="a" style="left:288.5px;top:877px;" width="10" height="14" viewBox="0 0 10 14" fill="none"><path d="M0.500 5.500h8v7h-8z" stroke="#3b3b3b" stroke-width="1" stroke-linejoin="round"/><path d="M2.500 5.500V3.500a2 2 0 0 1 4 0v2" stroke="#3b3b3b" stroke-width="1"/><circle cx="4.500" cy="8.700" r="0.800" fill="#1b1b1b"/></svg>
<div class="inp" style="left:233px;top:898px;width:438px;height:32px;"></div>
<span class="t" style="top:875px;font-size:13.5px;line-height:20px;color:#333;letter-spacing:-0.061px;left:694.8px;"><span>HKID No. e.g. Z1234567</span></span>
<div class="inp" style="left:694px;top:898px;width:439px;height:32px;"></div>
<span class="t" style="top:905px;font-size:13.5px;line-height:20px;color:#242424;letter-spacing:-0.070px;left:707.3px;"><span>A9555628</span></span>
<span class="t" style="top:875px;font-size:13.75px;line-height:20px;color:#333;letter-spacing:0.044px;left:1156px;"><span>Invitation Email Address</span></span>
<div class="inp" style="left:1156px;top:898px;width:459px;height:32px;"></div>
<span class="t" style="top:904px;font-size:14.0px;line-height:20px;color:#242424;letter-spacing:-0.046px;left:1169.1px;"><span>helperjohn852@gmail.com</span></span>
<div class="a" style="left:1583px;top:898px;width:32px;height:32px;background:#e6e6e6;border-radius:0 4px 4px 0;"></div>
<svg class="a" style="left:1590px;top:906px;" width="18" height="16" viewBox="0 0 18 16" fill="none"><rect x="1.500" y="2.650" width="15" height="11.700" rx="2.100" stroke="#555" stroke-width="1.050"/><path d="M1.800 5.100 9 9.500l7.200-4.400" stroke="#555" stroke-width="1.050" stroke-linejoin="round"/></svg>
<span class="t" style="top:946px;font-size:14.0px;line-height:20px;color:#333;letter-spacing:0.013px;left:233.5px;"><span>Title</span></span>
<div class="inp" style="left:233px;top:970px;width:438px;height:32px;"></div>
<span class="t" style="top:976px;font-size:14.5px;line-height:21px;color:#242424;letter-spacing:0.286px;left:246px;"><span>Mr.</span></span>
<svg class="a" style="left:643px;top:981px;" width="14" height="10" viewBox="0 0 14 10" fill="none"><path d="M1.100 2.400 6.900 8.400l5.900-6" stroke="#6b6b6b" stroke-width="1.150" stroke-linecap="round" stroke-linejoin="round"/></svg>
<span class="t" style="top:947px;font-size:13.5px;line-height:20px;color:#333;letter-spacing:-0.112px;left:694.8px;"><span>Surname</span></span>
<div class="inp" style="left:694px;top:970px;width:439px;height:32px;"></div>
<span class="t" style="top:977px;font-size:13.5px;line-height:20px;color:#242424;letter-spacing:-0.441px;left:707.3px;"><span>Rock</span></span>
<span class="t" style="top:947px;font-size:13.5px;line-height:20px;color:#333;left:1156px;"><span>Given Name</span></span>
<div class="inp" style="left:1156px;top:970px;width:459px;height:32px;"></div>
<span class="t" style="top:977px;font-size:13.5px;line-height:20px;color:#242424;letter-spacing:-0.195px;left:1169px;"><span>John</span></span>
<span class="t" style="top:1018px;font-size:14.0px;line-height:20px;color:#333;letter-spacing:-0.025px;left:233.5px;"><span>Date of Birth</span></span>
<div class="inp" style="left:233px;top:1042px;width:438px;height:32px;"></div>
<span class="t" style="top:1048px;font-size:14.5px;line-height:21px;color:#242424;letter-spacing:-0.057px;left:246px;"><span>1/4/2001</span></span>
<svg class="a" style="left:642px;top:1050px;" width="16" height="16" viewBox="0 0 16 16" fill="none"><rect x="1" y="1" width="14" height="14" rx="3" fill="#fff" opacity="0.900"/><rect x="1.500" y="1.500" width="13" height="13" rx="2.500" fill="#fff" stroke="#6a6a6a" stroke-width="0.900"/><path d="M4 5h2v2H4zM7 5h2v2H7zM10 5h2v2h-2zM4 9h2v2H4zM7 9h2v2H7z" fill="#666"/></svg>
<span class="t" style="top:1019px;font-size:13.5px;line-height:20px;color:#333;letter-spacing:-0.034px;left:694.8px;"><span>Acceptance Status</span></span>
<svg class="a" style="left:813.5px;top:1021px;" width="10" height="14" viewBox="0 0 10 14" fill="none"><path d="M0.500 5.500h8v7h-8z" stroke="#3b3b3b" stroke-width="1" stroke-linejoin="round"/><path d="M2.500 5.500V3.500a2 2 0 0 1 4 0v2" stroke="#3b3b3b" stroke-width="1"/><circle cx="4.500" cy="8.700" r="0.800" fill="#1b1b1b"/></svg>
<div class="inp" style="left:694px;top:1042px;width:439px;height:32px;"></div>
<span class="t" style="top:1019px;font-size:13.5px;line-height:20px;color:#333;letter-spacing:-0.008px;left:1156px;"><span>Casual Helper Responded On</span></span>
<svg class="a" style="left:1343.5px;top:1021px;" width="10" height="14" viewBox="0 0 10 14" fill="none"><path d="M0.500 5.500h8v7h-8z" stroke="#3b3b3b" stroke-width="1" stroke-linejoin="round"/><path d="M2.500 5.500V3.500a2 2 0 0 1 4 0v2" stroke="#3b3b3b" stroke-width="1"/><circle cx="4.500" cy="8.700" r="0.800" fill="#1b1b1b"/></svg>
<div class="inp" style="left:1156px;top:1042px;width:459px;height:32px;"></div>
</body></html>
